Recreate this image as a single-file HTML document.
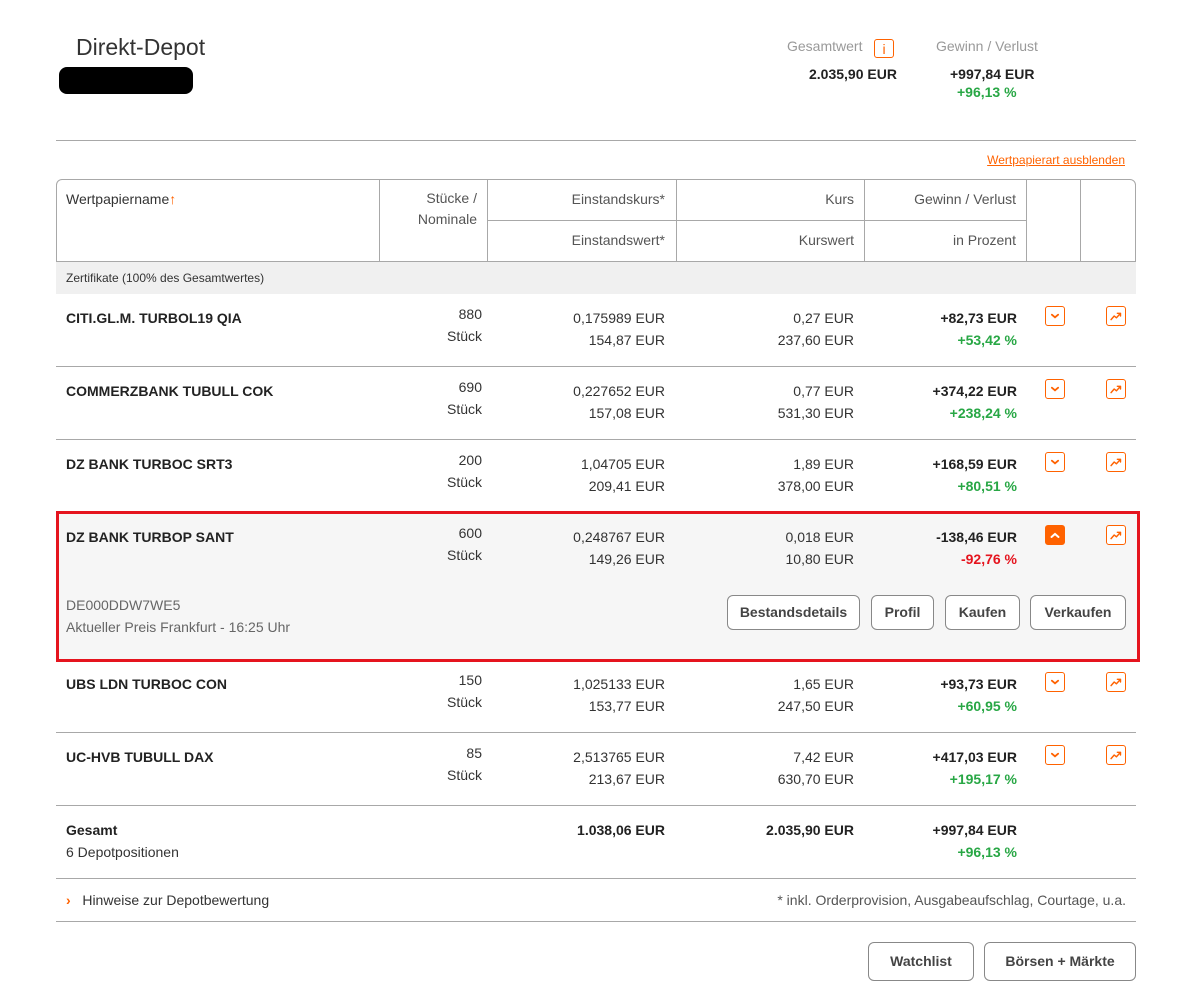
<!DOCTYPE html>
<html><head><meta charset="utf-8"><style>
*{margin:0;padding:0;box-sizing:border-box}
body{width:1182px;height:1007px;background:#fff;font-family:"Liberation Sans",sans-serif;font-size:14px;color:#333;position:relative;overflow:hidden}
.a{position:absolute;white-space:nowrap;line-height:22px}
.r{text-align:right}
.b{font-weight:bold;color:#222}
.g{color:#28a745;font-weight:bold}
.red{color:#e5141e;font-weight:bold}
.h{color:#555}
.hl{position:absolute;height:1px;background:#a8a8a8}
.vl{position:absolute;width:1px;background:#a8a8a8}
.ic{position:absolute;width:20px;height:20px;border:1px solid #ff6200;border-radius:3px;background:#fff}
.btn{position:absolute;height:35px;border:1px solid #888;border-radius:6px;background:#fff;font-weight:bold;color:#444;font-size:14px;line-height:33px;text-align:center}
</style></head><body>

<div class="a" style="left:76px;top:33px;font-size:23px;line-height:28px;color:#333">Direkt-Depot</div>
<div style="position:absolute;left:59px;top:67px;width:134px;height:27px;background:#000;border-radius:8px"></div>

<div class="a" style="left:787px;top:35px;color:#999">Gesamtwert</div>
<div style="position:absolute;left:874px;top:39px;width:20px;height:19px;border:1px solid #ff6200;border-radius:3px;color:#ff6200;font-size:14px;line-height:19px;text-align:center">i</div>
<div class="a b" style="left:809px;top:63px">2.035,90 EUR</div>
<div class="a" style="left:936px;top:35px;color:#999">Gewinn / Verlust</div>
<div class="a b" style="left:950px;top:63px">+997,84 EUR</div>
<div class="a g" style="left:957px;top:81px">+96,13 %</div>

<div class="hl" style="left:56px;top:140px;width:1080px"></div>
<div class="a" style="right:57px;top:149px;font-size:12px;color:#ff6200;text-decoration:underline">Wertpapierart ausblenden</div>

<!-- header table -->
<div style="position:absolute;left:56px;top:179px;width:1080px;height:83px;border:1px solid #a8a8a8;border-radius:6px 6px 0 0"></div>
<div class="vl" style="left:379px;top:179px;height:83px"></div>
<div class="vl" style="left:487px;top:179px;height:83px"></div>
<div class="vl" style="left:676px;top:179px;height:83px"></div>
<div class="vl" style="left:864px;top:179px;height:83px"></div>
<div class="vl" style="left:1026px;top:179px;height:83px"></div>
<div class="vl" style="left:1080px;top:179px;height:83px"></div>
<div class="hl" style="left:487px;top:220px;width:539px"></div>
<div class="a" style="left:66px;top:188px;color:#333">Wertpapiername<span style="color:#ff6200">↑</span></div>
<div class="a r h" style="right:705px;top:188px;line-height:21px">Stücke /<br>Nominale</div>
<div class="a r h" style="right:517px;top:188px">Einstandskurs*</div>
<div class="a r h" style="right:517px;top:229px">Einstandswert*</div>
<div class="a r h" style="right:328px;top:188px">Kurs</div>
<div class="a r h" style="right:328px;top:229px">Kurswert</div>
<div class="a r h" style="right:166px;top:188px">Gewinn / Verlust</div>
<div class="a r h" style="right:166px;top:229px">in Prozent</div>

<div style="position:absolute;left:56px;top:262px;width:1080px;height:32px;background:#f0f0f0"></div>
<div class="a" style="left:66px;top:267px;font-size:12px;color:#333">Zertifikate (100% des Gesamtwertes)</div>

<!-- expanded row bg -->
<div style="position:absolute;left:56px;top:511px;width:1084px;height:151px;background:#f6f6f6;border:3px solid #e5141e"></div>

<!-- row lines -->
<div class="hl" style="left:56px;top:366px;width:1080px"></div>
<div class="hl" style="left:56px;top:439px;width:1080px"></div>
<div class="hl" style="left:56px;top:732px;width:1080px"></div>
<div class="hl" style="left:56px;top:805px;width:1080px"></div>
<div class="hl" style="left:56px;top:878px;width:1080px"></div>
<div class="hl" style="left:56px;top:921px;width:1080px"></div>

<!-- Row 1 -->
<div class="a b" style="left:66px;top:307px">CITI.GL.M. TURBOL19 QIA</div>
<div class="a r" style="right:700px;top:303px">880<br>Stück</div>
<div class="a r" style="right:517px;top:307px">0,175989 EUR<br>154,87 EUR</div>
<div class="a r" style="right:328px;top:307px">0,27 EUR<br>237,60 EUR</div>
<div class="a r" style="right:165px;top:307px"><span class="b">+82,73 EUR</span><br><span class="g">+53,42 %</span></div>

<!-- Row 2 -->
<div class="a b" style="left:66px;top:380px">COMMERZBANK TUBULL COK</div>
<div class="a r" style="right:700px;top:376px">690<br>Stück</div>
<div class="a r" style="right:517px;top:380px">0,227652 EUR<br>157,08 EUR</div>
<div class="a r" style="right:328px;top:380px">0,77 EUR<br>531,30 EUR</div>
<div class="a r" style="right:165px;top:380px"><span class="b">+374,22 EUR</span><br><span class="g">+238,24 %</span></div>

<!-- Row 3 -->
<div class="a b" style="left:66px;top:453px">DZ BANK TURBOC SRT3</div>
<div class="a r" style="right:700px;top:449px">200<br>Stück</div>
<div class="a r" style="right:517px;top:453px">1,04705 EUR<br>209,41 EUR</div>
<div class="a r" style="right:328px;top:453px">1,89 EUR<br>378,00 EUR</div>
<div class="a r" style="right:165px;top:453px"><span class="b">+168,59 EUR</span><br><span class="g">+80,51 %</span></div>

<!-- Row 4 expanded -->
<div class="a b" style="left:66px;top:526px">DZ BANK TURBOP SANT</div>
<div class="a r" style="right:700px;top:522px">600<br>Stück</div>
<div class="a r" style="right:517px;top:526px">0,248767 EUR<br>149,26 EUR</div>
<div class="a r" style="right:328px;top:526px">0,018 EUR<br>10,80 EUR</div>
<div class="a r" style="right:165px;top:526px"><span class="b">-138,46 EUR</span><br><span class="red">-92,76 %</span></div>
<div class="a" style="left:66px;top:594px;color:#666">DE000DDW7WE5<br>Aktueller Preis Frankfurt - 16:25 Uhr</div>
<div class="btn" style="left:727px;top:595px;width:133px">Bestandsdetails</div>
<div class="btn" style="left:871px;top:595px;width:63px">Profil</div>
<div class="btn" style="left:945px;top:595px;width:75px">Kaufen</div>
<div class="btn" style="left:1030px;top:595px;width:96px">Verkaufen</div>

<!-- Row 5 -->
<div class="a b" style="left:66px;top:673px">UBS LDN TURBOC CON</div>
<div class="a r" style="right:700px;top:669px">150<br>Stück</div>
<div class="a r" style="right:517px;top:673px">1,025133 EUR<br>153,77 EUR</div>
<div class="a r" style="right:328px;top:673px">1,65 EUR<br>247,50 EUR</div>
<div class="a r" style="right:165px;top:673px"><span class="b">+93,73 EUR</span><br><span class="g">+60,95 %</span></div>

<!-- Row 6 -->
<div class="a b" style="left:66px;top:746px">UC-HVB TUBULL DAX</div>
<div class="a r" style="right:700px;top:742px">85<br>Stück</div>
<div class="a r" style="right:517px;top:746px">2,513765 EUR<br>213,67 EUR</div>
<div class="a r" style="right:328px;top:746px">7,42 EUR<br>630,70 EUR</div>
<div class="a r" style="right:165px;top:746px"><span class="b">+417,03 EUR</span><br><span class="g">+195,17 %</span></div>

<!-- Gesamt -->
<div class="a" style="left:66px;top:819px"><span class="b">Gesamt</span><br>6 Depotpositionen</div>
<div class="a r b" style="right:517px;top:819px">1.038,06 EUR</div>
<div class="a r b" style="right:328px;top:819px">2.035,90 EUR</div>
<div class="a r" style="right:165px;top:819px"><span class="b">+997,84 EUR</span><br><span class="g">+96,13 %</span></div>

<!-- icons -->
<svg width="0" height="0" style="position:absolute"><defs>
<symbol id="dn" viewBox="0 0 20 20"><path d="M6.5 8.5 L10 11.5 L13.5 8.5" fill="none" stroke="#ff6200" stroke-width="2" stroke-linecap="round"/></symbol>
<symbol id="ch" viewBox="0 0 20 20"><path d="M4.5 14 L8 10 L10.5 12 L14.5 7.5 M11.5 7 L15 7 L15 10" fill="none" stroke="#ff6200" stroke-width="1.6" stroke-linecap="round" stroke-linejoin="round"/></symbol>
</defs></svg>
<div class="ic" style="left:1045px;top:306px"><svg width="18" height="18"><use href="#dn"/></svg></div>
<div class="ic" style="left:1106px;top:306px"><svg width="18" height="18"><use href="#ch"/></svg></div>
<div class="ic" style="left:1045px;top:379px"><svg width="18" height="18"><use href="#dn"/></svg></div>
<div class="ic" style="left:1106px;top:379px"><svg width="18" height="18"><use href="#ch"/></svg></div>
<div class="ic" style="left:1045px;top:452px"><svg width="18" height="18"><use href="#dn"/></svg></div>
<div class="ic" style="left:1106px;top:452px"><svg width="18" height="18"><use href="#ch"/></svg></div>
<div class="ic" style="left:1045px;top:525px;background:#ff6200"><svg width="18" height="18"><path d="M5.5 11 L9 8 L12.5 11" fill="none" stroke="#fff" stroke-width="2" stroke-linecap="round"/></svg></div>
<div class="ic" style="left:1106px;top:525px"><svg width="18" height="18"><use href="#ch"/></svg></div>
<div class="ic" style="left:1045px;top:672px"><svg width="18" height="18"><use href="#dn"/></svg></div>
<div class="ic" style="left:1106px;top:672px"><svg width="18" height="18"><use href="#ch"/></svg></div>
<div class="ic" style="left:1045px;top:745px"><svg width="18" height="18"><use href="#dn"/></svg></div>
<div class="ic" style="left:1106px;top:745px"><svg width="18" height="18"><use href="#ch"/></svg></div>

<!-- footer -->
<div class="a" style="left:66px;top:889px"><span style="color:#ff6200;font-weight:bold">›</span>&nbsp;&nbsp; Hinweise zur Depotbewertung</div>
<div class="a r" style="right:56px;top:889px;color:#555">* inkl. Orderprovision, Ausgabeaufschlag, Courtage, u.a.</div>

<div class="btn" style="left:868px;top:942px;width:106px;height:39px;line-height:37px">Watchlist</div>
<div class="btn" style="left:984px;top:942px;width:152px;height:39px;line-height:37px">Börsen + Märkte</div>

</body></html>
